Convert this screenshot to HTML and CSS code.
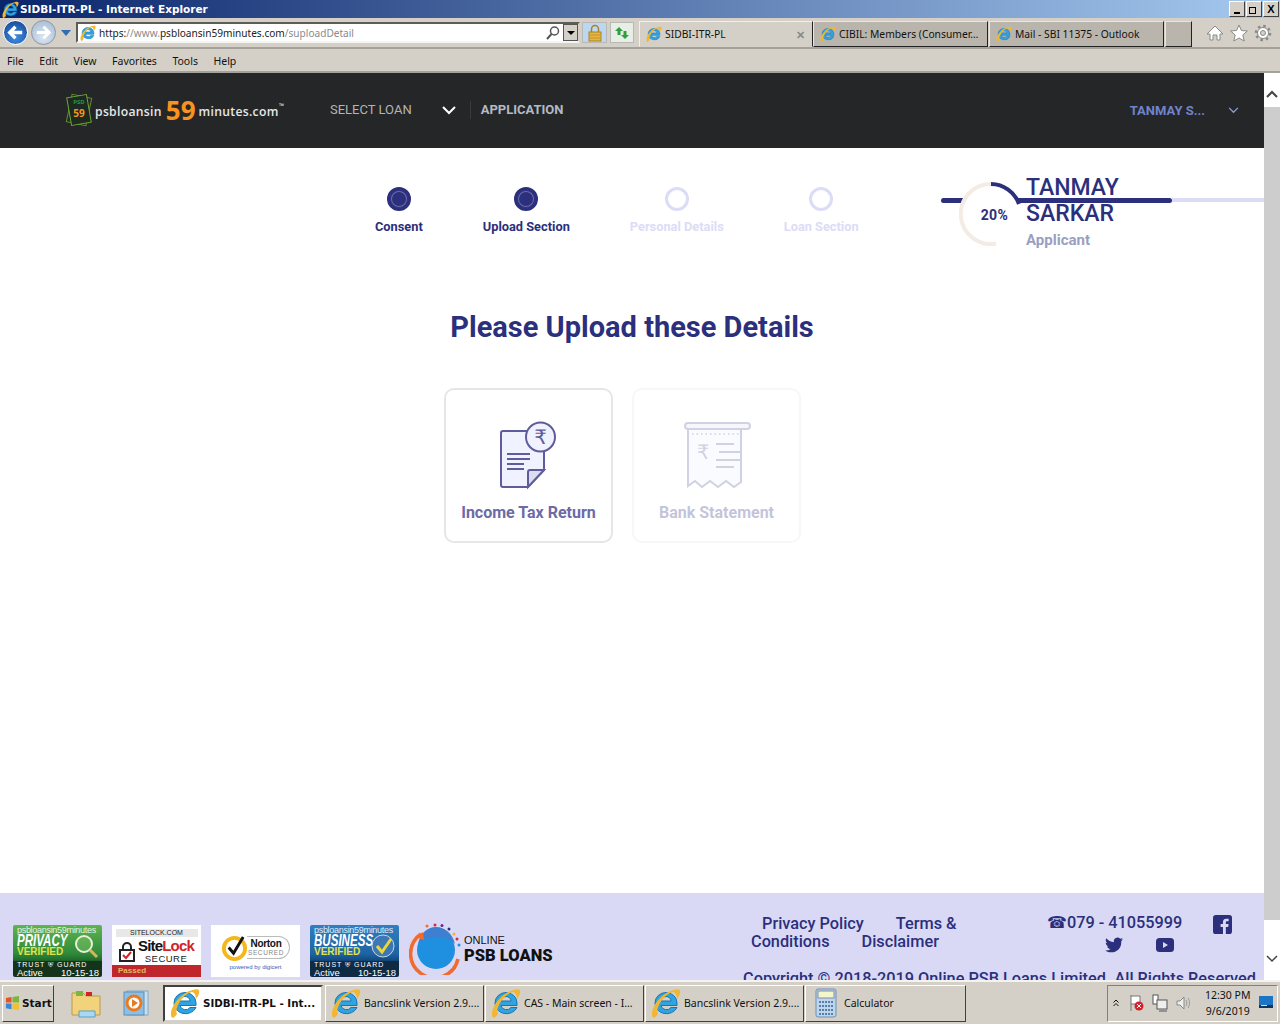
FILE: index.html
```html
<!DOCTYPE html>
<html lang="en">
<head>
    <meta charset="UTF-8">
    <meta name="viewport" content="width=device-width, initial-scale=1.0">
    <title>SIDBI-ITR-PL</title>
    <link rel="stylesheet" href="styles.css">
</head>
<body>
    <svg class="defs" width="0" height="0">
        <symbol id="ie" viewBox="1 1 30 30">
            <path d="M5 16a11 10.500 0 0 1 22 0v2.500H11a5.500 5 0 0 0 10 2h6a11.500 10.500 0 0 1-22-4.500zM11 14h10a5 4.500 0 0 0-10 0z" fill="#2fa4e0" stroke="#1677b8" stroke-width="1"/>
            <path d="M3 30.500C-1 26 6 11 19 4.500c5-2 10-3.500 11-1 1 2-1 6-3 8.500 0-3-1.500-7-4-7C14 7 5 21 8 27c-2 3-4 4.500-5 3.500z" fill="#f2b632"/>
        </symbol>
    </svg>

    <div class="titlebar">
        <svg class="ie-title"><use href="#ie"/></svg>
        <span class="title-text">SIDBI-ITR-PL - Internet Explorer</span>
        <div class="win-btns">
            <span class="win-btn"><i class="min-glyph"></i></span>
            <span class="win-btn"><i class="max-glyph"></i></span>
            <span class="win-btn close-btn">X</span>
        </div>
    </div>

    <div class="toolbar">
        <span class="nav-btn back"><svg viewBox="0 0 24 24"><path d="M19 12H7M12 6l-6 6 6 6" fill="none" stroke="#fff" stroke-width="3.500"/></svg></span>
        <span class="nav-btn forward"><svg viewBox="0 0 24 24"><path d="M5 12h12M12 6l6 6-6 6" fill="none" stroke="#fff" stroke-width="3"/></svg></span>
        <i class="nav-drop"></i>
        <div class="address">
            <svg class="ie-small"><use href="#ie"/></svg>
            <span class="url"><b>https:</b>//www.<b>psbloansin59minutes.com</b>/suploadDetail</span>
            <svg class="search-icon" viewBox="0 0 16 16"><circle cx="9.500" cy="6" r="4" fill="none" stroke="#555" stroke-width="1.500"/><path d="M6.500 9L2 14" stroke="#555" stroke-width="2"/></svg>
            <span class="addr-drop"></span>
        </div>
        <span class="lock-btn">
            <svg viewBox="0 0 16 18"><path d="M4.500 8V5a3.500 3.500 0 0 1 7 0v3" fill="none" stroke="#a8832a" stroke-width="1.500"/><rect x="2" y="8" width="12" height="9" fill="#e5b53e" stroke="#a8832a"/><path d="M3 11h10M3 14h10" stroke="#c4932b"/></svg>
        </span>
        <span class="refresh-btn">
            <svg viewBox="0 0 16 16"><path d="M1 6l4-4 4 4H6.500v4h-3V6zM15 10l-4 4-4-4h2.500V6h3v4z" fill="#2f9e3c"/></svg>
        </span>
        <div class="tabs">
            <div class="tab tab-active"><svg class="ie-small"><use href="#ie"/></svg><span class="tab-name">SIDBI-ITR-PL</span><span class="tab-x">✕</span></div>
            <div class="tab"><svg class="ie-small"><use href="#ie"/></svg><span class="tab-name">CIBIL: Members (Consumer…</span></div>
            <div class="tab"><svg class="ie-small"><use href="#ie"/></svg><span class="tab-name">Mail - SBI 11375 - Outlook</span></div>
            <div class="tab tab-new"></div>
        </div>
        <div class="tool-icons">
            <svg viewBox="0 0 18 18"><path d="M9 2l8 8h-3v6h-3v-5H7v5H4v-6H1z" fill="#fff" stroke="#8a8a85"/></svg>
            <svg viewBox="0 0 18 18"><path d="M9 1l2.400 5.500 6 .5-4.600 4 1.400 6L9 14l-5.200 3 1.400-6L.6 7l6-.5z" fill="#fff" stroke="#8a8a85"/></svg>
            <svg viewBox="0 0 18 18"><circle cx="9" cy="9" r="5.500" fill="#fff" stroke="#8a8a85" stroke-width="1"/><circle cx="9" cy="9" r="7" fill="none" stroke="#8a8a85" stroke-width="2.500" stroke-dasharray="2.500 3"/><circle cx="9" cy="9" r="2.500" fill="#d4d0c8" stroke="#8a8a85"/></svg>
        </div>
    </div>

    <div class="menubar">
        <span>File</span><span>Edit</span><span>View</span><span>Favorites</span><span>Tools</span><span>Help</span>
    </div>

    <div class="viewport">
        <div class="page">
            <header class="site-header">
                <div class="logo">
                    <svg class="logo-mark" viewBox="0 0 30 36">
                        <rect x="5" y="4" width="20" height="28" fill="none" stroke="#5e8f2f" transform="rotate(12 15 18)"/>
                        <rect x="5" y="4" width="20" height="28" fill="#1d2a20" stroke="#6fa635" transform="rotate(-10 15 18)"/>
                        <text x="15" y="12" class="logo-psd">PSD</text>
                        <text x="15" y="25" class="logo-59">59</text>
                    </svg>
                    <span class="logo-name">psbloansin</span>
                    <span class="logo-num">59</span>
                    <span class="logo-name">minutes.com</span>
                    <sup class="logo-tm">™</sup>
                </div>
                <a class="nav-select">SELECT LOAN</a>
                <svg class="nav-chev" viewBox="0 0 14 9"><path d="M1 1l6 6 6-6" fill="none" stroke="#fff" stroke-width="2"/></svg>
                <span class="nav-sep"></span>
                <a class="nav-app">APPLICATION</a>
                <div class="user-menu">
                    <span class="user-name">TANMAY S...</span>
                    <svg class="user-chev" viewBox="0 0 12 8"><path d="M1 1l5 5 5-5" fill="none" stroke="#8f9bd4" stroke-width="1.500"/></svg>
                </div>
            </header>

            <main class="content">
                <div class="top-row">
                    <div class="stepper">
                        <div class="step done"><span class="dot"></span><span class="step-label">Consent</span></div>
                        <div class="step done"><span class="dot"></span><span class="step-label">Upload Section</span></div>
                        <div class="step"><span class="dot"></span><span class="step-label">Personal Details</span></div>
                        <div class="step"><span class="dot"></span><span class="step-label">Loan Section</span></div>
                    </div>
                    <div class="profile">
                        <span class="line-dark"></span>
                        <span class="line-light"></span>
                        <svg class="ring" viewBox="0 0 64 64">
                            <circle cx="32" cy="32" r="29" fill="#fff"/>
                            <path d="M37.200 61.500A30 30 0 1 1 32 2" fill="none" stroke="#f3ebe4" stroke-width="4"/>
                            <path d="M32 2A30 30 0 0 1 60 22" fill="none" stroke="#2b2f7c" stroke-width="4"/>
                            <text x="35.500" y="38" class="ring-text">20%</text>
                        </svg>
                        <div class="who">
                            <div class="who-name">TANMAY SARKAR</div>
                            <div class="who-role">Applicant</div>
                        </div>
                    </div>
                </div>

                <h1 class="heading">Please Upload these Details</h1>

                <div class="cards">
                    <div class="card">
                        <svg class="card-icon" viewBox="0 0 70 70">
                            <path d="M9 11h39a2 2 0 0 1 2 2v37L34 67H9a2 2 0 0 1-2-2V13a2 2 0 0 1 2-2z" fill="#f0f2ff" stroke="#5f5c9e" stroke-width="2"/>
                            <path d="M34 67V52a2 2 0 0 1 2-2h14z" fill="#dcdcec" stroke="#5f5c9e" stroke-width="2"/>
                            <path d="M13 34h23M13 39h23M13 44h17M13 49h17" stroke="#5f5c9e" stroke-width="2"/>
                            <circle cx="46.500" cy="17" r="14.500" fill="#f0f2ff" stroke="#5f5c9e" stroke-width="2"/>
                            <text x="46.500" y="24" class="rupee">₹</text>
                        </svg>
                        <span class="card-label">Income Tax Return</span>
                    </div>
                    <div class="card card-off">
                        <svg class="card-icon" viewBox="0 0 70 70">
                            <rect x="3" y="3" width="65" height="6" rx="3" fill="#e3e4f1" stroke="#5f5c9e" stroke-width="2"/>
                            <path d="M6 9v57l7-5 7 6 8-6 8 6 8-6 8 6 7-5V9z" fill="#f0f2ff" stroke="#5f5c9e" stroke-width="2"/>
                            <path d="M10 14h50" stroke="#5f5c9e" stroke-width="1.500" stroke-dasharray="1.500 3"/>
                            <path d="M34 24h18M37 32h23M34 40h26M34 47h18" stroke="#5f5c9e" stroke-width="2"/>
                            <text x="21" y="39" class="rupee">₹</text>
                        </svg>
                        <span class="card-label">Bank Statement</span>
                    </div>
                </div>
            </main>

            <footer class="site-footer">
                <div class="badges">
                    <div class="badge tg-green">
                        <span class="tg-top">psbloansin59minutes</span>
                        <span class="tg-big">PRIVACY</span>
                        <span class="tg-ver">VERIFIED</span>
                        <span class="tg-trust">TRUST ⛨ GUARD</span>
                        <span class="tg-foot"><span>Active</span><span>10-15-18</span></span>
                        <svg class="tg-art" viewBox="0 0 26 26"><circle cx="11" cy="11" r="8" fill="#7cc163" fill-opacity=".5" stroke="#e8efd8" stroke-width="2"/><path d="M17 17l7 7" stroke="#d7b35a" stroke-width="3"/></svg>
                    </div>
                    <div class="badge sitelock">
                        <span class="sl-top">SITELOCK.COM</span>
                        <div class="sl-mid">
                            <svg class="sl-lock" viewBox="0 0 16 20"><path d="M4 9V5a4 4 0 0 1 8 0v4" fill="none" stroke="#222" stroke-width="2"/><rect x="1" y="8" width="14" height="11" fill="#fff" stroke="#222" stroke-width="2"/><path d="M4 13l3 3 5-6" fill="none" stroke="#d2232a" stroke-width="2"/></svg>
                            <div class="sl-words">
                                <span class="sl-name">Site<em>Lock</em></span>
                                <span class="sl-secure">SECURE</span>
                            </div>
                        </div>
                        <span class="sl-pass">Passed</span>
                    </div>
                    <div class="badge norton">
                        <div class="nt-row">
                            <svg class="nt-check" viewBox="0 0 28 28"><circle cx="14" cy="15" r="11" fill="#fff" stroke="#f5b81c" stroke-width="4"/><path d="M8 14l5 6L23 3" fill="none" stroke="#111" stroke-width="3"/></svg>
                            <div class="nt-pill">
                                <span class="nt-name">Norton</span>
                                <span class="nt-sec">SECURED</span>
                            </div>
                        </div>
                        <span class="nt-by">powered by digicert</span>
                    </div>
                    <div class="badge tg-blue">
                        <span class="tg-top">psbloansin59minutes</span>
                        <span class="tg-big">BUSINESS</span>
                        <span class="tg-ver">VERIFIED</span>
                        <span class="tg-trust">TRUST ⛨ GUARD</span>
                        <span class="tg-foot"><span>Active</span><span>10-15-18</span></span>
                        <svg class="tg-art" viewBox="0 0 26 26"><circle cx="13" cy="13" r="11" fill="#3d78b5" stroke="#c9d6e4"/><path d="M7 13l5 6L21 6" fill="none" stroke="#e8d63a" stroke-width="3"/></svg>
                    </div>
                    <div class="psb-logo">
                        <svg class="psb-mark" viewBox="0 0 52 52">
                            <circle cx="27" cy="27" r="19" fill="#1f8fe0"/>
                            <path d="M9 21c8-8 28-10 37 0-2-10-10-17-19-17S11 11 9 21z" fill="#3f7fcf"/>
                            <path d="M12 11A24 24 0 1 0 49 36" fill="none" stroke="#f26a2e" stroke-width="3.500"/>
                            <path d="M6 14l8-5 1 8z" fill="#f26a2e"/>
                            <g class="psb-dots">
                                <circle cx="18" cy="3" r="1.500" fill="#f26a2e"/><circle cx="26" cy="2" r="1.500" fill="#d22a4c"/><circle cx="33" cy="2.500" r="1.500" fill="#5e2d91"/><circle cx="40" cy="6" r="1.500" fill="#2b2f7c"/><circle cx="45" cy="11" r="1.500" fill="#f5b81c"/><circle cx="48" cy="16" r="1.500" fill="#d22a4c"/><circle cx="50" cy="22" r="1.500" fill="#1f8fe0"/>
                            </g>
                        </svg>
                        <div class="psb-words">
                            <span class="psb-online">ONLINE</span>
                            <span class="psb-name">PSB LOANS</span>
                        </div>
                    </div>
                </div>

                <div class="foot-right">
                    <div class="foot-top">
                        <div class="foot-links">
                            <div class="links-one"><a>Privacy Policy</a><a>Terms &amp;</a></div>
                            <div class="links-two"><a>Conditions</a><a>Disclaimer</a></div>
                        </div>
                        <div class="contact">
                            <div class="contact-row">
                                <span class="phone"><span class="phone-glyph">☎</span>079 - 41055999</span>
                                <svg class="fb" viewBox="0 0 20 20"><path d="M3 0h14a3 3 0 0 1 3 3v14a3 3 0 0 1-3 3h-3.500v-7.500H16l.4-3h-2.900V8c0-1 .4-1.500 1.500-1.500h1.500V4h-2.500C11.500 4 10.500 5.500 10.500 7.500v2H8v3h2.500V20H3a3 3 0 0 1-3-3V3a3 3 0 0 1 3-3z" fill="#2b2f7c"/></svg>
                            </div>
                            <div class="social-row">
                                <svg class="tw" viewBox="0 0 24 20"><path d="M24 2.400c-.9.400-1.800.7-2.800.8 1-.6 1.800-1.600 2.200-2.700-1 .6-2 1-3.100 1.200A4.900 4.900 0 0 0 11.900 6.200C7.800 6 4.200 4 1.700.9c-1.300 2.200-.7 5.100 1.500 6.600-.8 0-1.600-.2-2.200-.6 0 2.300 1.600 4.400 4 4.900-.7.200-1.500.2-2.200.1.600 2 2.400 3.400 4.600 3.400A9.900 9.900 0 0 1 0 17.300C9.800 23.600 22.900 17.500 21.600 5c1-.7 1.800-1.600 2.400-2.600z" fill="#2b2f7c"/></svg>
                                <svg class="yt" viewBox="0 0 18 14"><rect width="18" height="14" rx="3.500" fill="#2b2f7c"/><path d="M7 4l5 3-5 3z" fill="#d9d9f5"/></svg>
                            </div>
                        </div>
                    </div>
                    <p class="copyright">Copyright © 2018-2019 Online PSB Loans Limited. All Rights Reserved</p>
                </div>
            </footer>
        </div>

        <div class="scrollbar">
            <svg class="arrow" viewBox="0 0 16 16"><path d="M3 10l5-5 5 5" fill="none" stroke="#444" stroke-width="2"/></svg>
            <div class="thumb"></div>
            <svg class="arrow arrow-down" viewBox="0 0 16 16"><path d="M3 6l5 5 5-5" fill="none" stroke="#444" stroke-width="1.500"/></svg>
        </div>
    </div>

    <div class="taskbar">
        <div class="start"><svg viewBox="0 0 16 16"><path d="M1 2l6-1v6H1z" fill="#e2562a"/><path d="M8 1l7-1v7H8z" fill="#7db63d"/><path d="M1 8h6v6l-6-1z" fill="#3a86d8"/><path d="M8 8h7v7l-7-1z" fill="#f1c02f"/></svg>Start</div>
        <div class="quick">
            <svg class="folder" viewBox="0 0 32 32"><path d="M1 6h11l3 3h14v19H1z" fill="#f2d27a" stroke="#b59a52"/><rect x="5" y="4" width="7" height="5" fill="#7db63d"/><rect x="15" y="5" width="6" height="4" fill="#d2232a"/><path d="M8 24h16v6H8z" fill="#a8d8f2" stroke="#5e9ec4"/></svg>
            <svg class="player" viewBox="0 0 28 28"><rect x="5" y="2" width="21" height="24" fill="#c9dff0" stroke="#7fa8c9"/><rect x="2" y="3" width="20" height="23" fill="#8cbfe6" stroke="#5c8fb8"/><circle cx="12" cy="14" r="7" fill="#fff" stroke="#ea7a1f" stroke-width="3"/><path d="M10 10l6 4-6 4z" fill="#ea7a1f"/></svg>
        </div>
        <div class="task active"><svg class="ie-task"><use href="#ie"/></svg><span>SIDBI-ITR-PL - Int...</span></div>
        <div class="task"><svg class="ie-task"><use href="#ie"/></svg><span>Bancslink Version 2.9....</span></div>
        <div class="task"><svg class="ie-task"><use href="#ie"/></svg><span>CAS - Main screen - I...</span></div>
        <div class="task"><svg class="ie-task"><use href="#ie"/></svg><span>Bancslink Version 2.9....</span></div>
        <div class="task calc"><svg class="ie-task" viewBox="0 0 22 30"><rect x="1" y="1" width="20" height="28" rx="2" fill="#bcd6ee" stroke="#6b8fb3"/><rect x="3" y="3" width="16" height="7" fill="#f2f6c8" stroke="#88a"/><path d="M4 14h14M4 18h14M4 22h14M4 26h14" stroke="#5a7ea8" stroke-width="2" stroke-dasharray="2 1"/></svg><span>Calculator</span></div>
        <div class="tray">
            <svg class="tray-up" viewBox="0 0 6 8"><path d="M.5 3.500L3 1l2.500 2.500M.5 7L3 4.500 5.500 7" fill="none" stroke="#111"/></svg>
            <svg class="tray-ico" viewBox="0 0 16 18"><path d="M2 1v16M2 2h9v8H2" fill="#fff" stroke="#777"/><circle cx="10" cy="12" r="4.500" fill="#d2232a"/><path d="M8 10l4 4M12 10l-4 4" stroke="#fff"/></svg>
            <svg class="tray-ico" viewBox="0 0 16 18"><rect x="1" y="1" width="5" height="9" fill="#fff" stroke="#555"/><rect x="5" y="6" width="10" height="9" fill="#eee" stroke="#555"/><path d="M7 17h8" stroke="#555"/></svg>
            <svg class="tray-ico" viewBox="0 0 16 18"><path d="M2 7h3l4-4v12l-4-4H2z" fill="#eee" stroke="#888"/><path d="M11 6c1 2 1 4 0 6M13 4c2 3 2 7 0 10" fill="none" stroke="#999"/></svg>
            <div class="clock"><span>12:30 PM</span><span>9/6/2019</span></div>
            <svg class="desktop-ico" viewBox="0 0 14 14"><rect width="14" height="12" fill="#1c74c4"/><rect y="9" width="14" height="3" fill="#10365f"/><rect x="2" y="9" width="6" height="1" fill="#ddd"/></svg>
        </div>
    </div>
</body>
</html>
```

FILE: styles.css
```css
* {
    box-sizing: border-box;
    margin: 0;
    padding: 0;
}

body {
    width: 1280px;
    height: 1024px;
    overflow: hidden;
    display: flex;
    flex-direction: column;
    font-family: 'Noto Sans', sans-serif;
    background: #d4d0c8;
    color: #000;
}

.defs {
    position: absolute;
}

/* window chrome */
.titlebar {
    height: 18px;
    flex: none;
    display: flex;
    align-items: center;
    background: linear-gradient(90deg, #0a246a, #a6caf0);
    color: #fff;
}

.ie-title {
    width: 17px;
    height: 17px;
    margin: 0 1px 0 2px;
}

.title-text {
    font: bold 10.500px 'DejaVu Sans', sans-serif;
}

.win-btns {
    margin-left: auto;
    display: flex;
    gap: 1px;
    padding-right: 1px;
}

.win-btn {
    width: 16px;
    height: 16px;
    background: #d4d0c8;
    border: 1px solid;
    border-color: #fff #404040 #404040 #fff;
    display: flex;
    align-items: center;
    justify-content: center;
    font: bold 11px 'Liberation Sans', sans-serif;
    color: #000;
}

.min-glyph {
    width: 6px;
    height: 2px;
    background: #000;
    margin-top: 7px;
}

.max-glyph {
    position: relative;
    width: 7px;
    height: 7px;
    border: 1px solid #000;
    margin: 3px 3px 0 0;
    background: #d4d0c8;
}

.max-glyph::before {
    content: "";
    position: absolute;
    z-index: -1;
    width: 7px;
    height: 7px;
    left: 1px;
    top: -4px;
    border: 1px solid #000;
    border-top-width: 2px;
}

.toolbar {
    height: 31px;
    flex: none;
    display: flex;
    align-items: center;
    padding-left: 3px;
    border-bottom: 2px solid #a5a29b;
    background: #d4d0c8;
}

.nav-btn {
    width: 25px;
    height: 25px;
    border-radius: 50%;
    flex: none;
    display: flex;
    margin-right: 3px;
}

.nav-btn.back {
    background: radial-gradient(circle at 50% 70%, #3f8fe0, #153f8e);
    border: 1px solid #fff;
}

.nav-btn.forward {
    background: radial-gradient(circle at 50% 70%, #d9e6f4, #a4b8cf);
    border: 1px solid #8e97a3;
}

.nav-drop {
    width: 0;
    height: 0;
    border: 5px solid transparent;
    border-top: 6px solid #2f6db5;
    border-bottom: 0;
    margin: 0 5px 0 2px;
}

.address {
    width: 504px;
    height: 21px;
    flex: none;
    display: flex;
    align-items: center;
    background: #fff;
    border: 2px solid;
    border-color: #5e5c57 #d4d0c8 #f5f5f2 #5e5c57;
    font-size: 10.100px;
    color: #8a8a8a;
}

.ie-small {
    width: 16px;
    height: 16px;
    flex: none;
    margin: 0 3px 0 2px;
}

.url b {
    font-weight: 400;
    color: #222;
}

.search-icon {
    width: 16px;
    height: 16px;
    margin-left: auto;
    margin-right: 2px;
}

.addr-drop {
    width: 15px;
    height: 17px;
    background: #d4d0c8;
    border: 1px solid #555;
    position: relative;
}

.addr-drop::after {
    content: "";
    position: absolute;
    left: 3px;
    top: 6px;
    border: 4px solid transparent;
    border-top: 4px solid #000;
}

.lock-btn, .refresh-btn {
    width: 25px;
    height: 21px;
    flex: none;
    display: flex;
    justify-content: center;
    align-items: center;
    margin-left: 2px;
    border: 1px solid #b9b9b3;
    background: #bcd7ef;
}

.refresh-btn {
    width: 24px;
    margin-left: 3px;
    background: #e6eee6;
}

.lock-btn svg {
    height: 18px;
    width: 16px;
}

.refresh-btn svg {
    width: 16px;
    height: 16px;
}

.tabs {
    display: flex;
    margin-left: 5px;
    height: 26px;
    align-self: flex-end;
}

.tab {
    width: 175px;
    display: flex;
    align-items: center;
    padding-left: 4px;
    font-size: 10.300px;
    background: #b9b5ad;
    border: 1px solid;
    border-color: #e8e6e0 #222 #222 #e8e6e0;
    margin-right: 1px;
    color: #111;
}

.tab-active {
    width: 174px;
    background: #d4d0c8;
    border-color: #f2f0ea #222 #d4d0c8 #f2f0ea;
    margin-right: 0;
}

.tab-new {
    width: 27px;
}

.tab-x {
    margin-left: auto;
    margin-right: 7px;
    color: #8a8a85;
    font-weight: 700;
    font-size: 11px;
}

.tool-icons {
    display: flex;
    gap: 6px;
    margin-left: 13px;
}

.tool-icons svg {
    width: 18px;
    height: 18px;
}

.menubar {
    height: 24px;
    flex: none;
    display: flex;
    align-items: center;
    gap: 15.500px;
    padding: 1px 0 0 7px;
    font-size: 10.500px;
    color: #111;
    border-bottom: 2px solid #a5a29b;
}

/* page */
.viewport {
    flex: 1;
    min-height: 0;
    display: flex;
    background: #fff;
}

.page {
    width: 1264px;
    display: flex;
    flex-direction: column;
    font-family: Roboto, sans-serif;
    background: #fff;
}

.site-header {
    height: 75px;
    flex: none;
    background: #252628;
    display: flex;
    align-items: center;
    padding-left: 64px;
}

.logo {
    width: 266px;
    flex: none;
    display: flex;
    align-items: center;
    color: #e6e6e6;
    margin-bottom: 2px;
}

.logo-mark {
    width: 30px;
    height: 36px;
    margin-right: 1px;
}

.logo-psd {
    font: bold 6px 'Open Sans', sans-serif;
    fill: #1f9b45;
    text-anchor: middle;
}

.logo-59 {
    font: bold 10px 'Open Sans', sans-serif;
    fill: #f7931e;
    text-anchor: middle;
}

.logo-name {
    font: 600 12.200px 'Open Sans', sans-serif;
    letter-spacing: .3px;
    margin-top: 3px;
}

.logo-num {
    font: bold 26px/1 'Open Sans', sans-serif;
    color: #f7931e;
    margin: 0 3px 0 4px;
}

.logo-tm {
    font-size: 9px;
    margin-top: -6px;
}

.nav-select {
    font-size: 13px;
    color: #b4b4b4;
    margin-bottom: 2px;
}

.nav-chev {
    width: 14px;
    height: 9px;
    margin-left: 30px;
}

.nav-sep {
    width: 1px;
    height: 18px;
    background: #3a3b3d;
    margin: 0 10px 2px 14px;
}

.nav-app {
    font-size: 13px;
    font-weight: 700;
    color: #b4b9c4;
    margin-bottom: 2px;
}

.user-menu {
    margin-left: auto;
    padding-right: 25px;
    display: flex;
    align-items: center;
    gap: 23px;
}

.user-name {
    font-size: 13px;
    font-weight: 700;
    color: #6f84cc;
}

.user-chev {
    width: 11px;
    height: 7px;
}

.content {
    flex: 1;
    min-height: 0;
}

.top-row {
    display: flex;
    align-items: flex-start;
    padding: 27px 0 0 375px;
}

.stepper {
    display: flex;
    gap: 60px;
    margin-top: 12px;
    width: 484px;
    flex: none;
}

.step {
    display: flex;
    flex-direction: column;
    align-items: center;
    gap: 8px;
}

.dot {
    width: 24px;
    height: 24px;
    border-radius: 50%;
    border: 3px solid #dcdcf7;
    background: #fff;
}

.step.done .dot {
    background: #2b2f7c;
    border-color: #2b2f7c;
    box-shadow: inset 0 0 0 1px #2b2f7c, inset 0 0 0 2px #6a6da8;
}

.step-label {
    font-size: 12.800px;
    line-height: 16px;
    font-weight: 700;
    color: #dcdcf7;
    white-space: nowrap;
}

.step.done .step-label {
    color: #2b2f7c;
}

.profile {
    position: relative;
    flex: 1;
    margin-left: 82px;
    display: flex;
    padding-left: 18px;
}

.line-dark, .line-light {
    position: absolute;
    top: 23px;
    height: 5px;
    left: 0;
    width: 231px;
    background: #2b2f7c;
    border-radius: 3px;
}

.line-light {
    left: 231px;
    width: 92px;
    height: 4px;
    background: #dcdcf7;
    border-radius: 0;
}

.ring {
    position: relative;
    width: 64px;
    height: 64px;
    margin-top: 7px;
    flex: none;
}

.ring-text {
    font: bold 14px Roboto, sans-serif;
    fill: #2b2f7c;
    text-anchor: middle;
    letter-spacing: .4px;
}

.who {
    position: relative;
    margin-left: 3px;
}

.who-name {
    width: 120px;
    font-size: 23px;
    line-height: 26px;
    font-weight: 500;
    color: #2b2f7c;
}

.who-role {
    font-size: 15px;
    line-height: 24px;
    font-weight: 700;
    color: #9a9fc2;
    margin-top: 1px;
}

.heading {
    text-align: center;
    font-size: 29px;
    line-height: 36px;
    font-weight: 700;
    color: #2b2f7c;
    margin-top: 57px;
}

.cards {
    display: flex;
    justify-content: center;
    margin-top: 43px;
}

.card {
    width: 169px;
    height: 155px;
    margin-right: 19px;
    border: 2px solid #e6e6e6;
    border-radius: 10px;
    display: flex;
    flex-direction: column;
    align-items: center;
    padding-top: 30px;
}

.card-icon {
    width: 70px;
    height: 70px;
}

.rupee {
    font: 500 20px 'DejaVu Sans', sans-serif;
    fill: #5f5c9e;
    text-anchor: middle;
}

.card-label {
    margin-top: 13px;
    font-size: 16px;
    line-height: 20px;
    font-weight: 700;
    color: #6d6aa6;
}

.card-off {
    border-color: #f7f7f9;
}

.card-off .card-icon, .card-off .card-label {
    opacity: .28;
}

.card-off .card-label {
    color: #2b2f7c;
}

/* footer, cut off by the taskbar */
.site-footer {
    height: 87px;
    flex: none;
    overflow: hidden;
    display: flex;
    background: #d9d9f5;
    padding: 21px 0 0 13px;
}

.badges {
    width: 722px;
    flex: none;
    display: flex;
    gap: 10px;
    margin-top: 11px;
    align-items: flex-start;
}

.badge {
    width: 89px;
    height: 52px;
    flex: none;
    position: relative;
    overflow: hidden;
    font-family: 'Liberation Sans', sans-serif;
}

.tg-green, .tg-blue {
    display: flex;
    flex-direction: column;
    padding: 1px 3px 0 4px;
    color: #fff;
    border-radius: 2px;
    background: linear-gradient(#5fb550 0, #2f8a3a 55%, #1f6b2c 68%, #13331b 70%);
}

.tg-blue {
    background: linear-gradient(#2f7fc2 0, #1f64a4 55%, #134a80 68%, #0e2a44 70%);
}

.tg-top {
    font-size: 9px;
    line-height: 9px;
    letter-spacing: -.3px;
    white-space: nowrap;
    opacity: .85;
}

.tg-big {
    font-size: 17px;
    line-height: 12px;
    font-weight: 700;
    font-style: italic;
    transform: scaleX(.68);
    transform-origin: left;
}

.tg-ver {
    font-size: 10px;
    line-height: 10px;
    font-weight: 700;
    color: #e2e34a;
}

.tg-trust {
    font-size: 7px;
    line-height: 8px;
    margin-top: 4px;
    letter-spacing: 1px;
    white-space: nowrap;
}

.tg-foot {
    display: flex;
    justify-content: space-between;
    font-size: 9.500px;
    line-height: 8px;
}

.tg-art {
    position: absolute;
    right: 3px;
    top: 8px;
    width: 26px;
    height: 26px;
}

.sitelock {
    background: #fff;
    display: flex;
    flex-direction: column;
    align-items: center;
    padding-top: 4px;
}

.sl-top {
    width: 82px;
    background: #e8e8e8;
    text-align: center;
    font-size: 7px;
    line-height: 8px;
    color: #222;
}

.sl-mid {
    display: flex;
    align-items: center;
    gap: 3px;
    height: 28px;
    margin-top: 1px;
}

.sl-lock {
    width: 16px;
    height: 20px;
}

.sl-words {
    display: flex;
    flex-direction: column;
    align-items: center;
}

.sl-name {
    font-size: 15px;
    line-height: 14px;
    font-weight: 700;
    letter-spacing: -.8px;
    color: #111;
}

.sl-name em {
    font-style: normal;
    color: #d2232a;
}

.sl-secure {
    font-size: 9.500px;
    line-height: 11px;
    letter-spacing: .5px;
    color: #222;
}

.sl-pass {
    align-self: stretch;
    margin-top: auto;
    height: 12px;
    background: #c0272d;
    color: #e0b95c;
    font-size: 8px;
    line-height: 12px;
    font-weight: 700;
    padding-left: 6px;
}

.norton {
    background: #fff;
    display: flex;
    flex-direction: column;
    align-items: center;
    padding-top: 9px;
}

.nt-row {
    display: flex;
    align-items: center;
}

.nt-check {
    width: 27px;
    height: 27px;
    margin-right: -1px;
}

.nt-pill {
    display: flex;
    flex-direction: column;
    align-items: center;
    border: 1px solid #bbb;
    border-left: 0;
    border-radius: 0 12px 12px 0;
    padding: 2px 5px 1px 1px;
}

.nt-name {
    font-size: 10px;
    line-height: 10px;
    font-weight: 700;
    letter-spacing: -.3px;
    color: #111;
}

.nt-sec {
    font-size: 6.500px;
    line-height: 8px;
    letter-spacing: .6px;
    color: #888;
}

.nt-by {
    margin-top: 2px;
    font-size: 6px;
    line-height: 8px;
    color: #3a5bb5;
}

.psb-logo {
    display: flex;
    align-items: center;
    margin-top: -2px;
    font-family: 'Liberation Sans', sans-serif;
}

.psb-mark {
    width: 52px;
    height: 52px;
}

.psb-words {
    display: flex;
    flex-direction: column;
    margin-left: 3px;
    color: #111;
}

.psb-online {
    font-size: 11px;
    line-height: 14px;
}

.psb-name {
    font-family: Roboto, sans-serif;
    font-size: 16.500px;
    line-height: 18px;
    font-weight: 900;
}

.foot-right {
    flex: 1;
    font-weight: 500;
    color: #2b2f7c;
}

.foot-top {
    display: flex;
    align-items: flex-start;
}

.foot-links {
    width: 234px;
    flex: none;
    font-size: 16.300px;
    line-height: 18px;
    margin-top: 1px;
}

.links-one, .links-two {
    display: flex;
    gap: 32px;
    padding-left: 27px;
}

.links-two {
    padding-left: 16px;
}

.contact {
    width: 185px;
    margin-left: 78px;
    flex: none;
}

.contact-row {
    display: flex;
    justify-content: space-between;
    align-items: flex-start;
    font-size: 16.300px;
    line-height: 18px;
}

.phone-glyph {
    font-family: 'DejaVu Sans', sans-serif;
    font-size: 16px;
}

.fb {
    width: 19px;
    height: 19px;
    margin-top: 1px;
}

.social-row {
    display: flex;
    align-items: center;
    gap: 33px;
    margin-top: 3px;
    padding-left: 58px;
}

.tw {
    width: 18px;
    height: 16px;
}

.yt {
    width: 18px;
    height: 14px;
}

.copyright {
    text-align: center;
    font-size: 16.300px;
    line-height: 24px;
    margin-top: 14px;
    white-space: nowrap;
}

.scrollbar {
    width: 16px;
    flex: none;
    display: flex;
    flex-direction: column;
    background: #fff;
    padding-top: 14px;
}

.arrow {
    width: 16px;
    height: 16px;
    flex: none;
}

.thumb {
    height: 813px;
    margin-top: 4px;
    background: #cdcdcd;
}

.arrow-down {
    margin-top: 30px;
}

/* taskbar */
.taskbar {
    height: 44px;
    flex: none;
    display: flex;
    align-items: center;
    background: #d4d0c8;
    border-top: 2px solid #f4f3ef;
    padding-left: 2px;
    font-size: 10.500px;
    color: #111;
}

.start {
    width: 52px;
    height: 37px;
    flex: none;
    display: flex;
    align-items: center;
    gap: 2px;
    padding-left: 2px;
    font: bold 10.500px 'DejaVu Sans', sans-serif;
    border: 1px solid;
    border-color: #fff #404040 #404040 #fff;
}

.start svg {
    width: 15px;
    height: 15px;
    flex: none;
}

.quick {
    width: 109px;
    flex: none;
    display: flex;
    align-items: center;
    padding-left: 17px;
    gap: 19px;
}

.folder {
    width: 32px;
    height: 32px;
    flex: none;
}

.player {
    width: 28px;
    height: 28px;
    flex: none;
}

.task {
    width: 159px;
    height: 37px;
    flex: none;
    display: flex;
    align-items: center;
    gap: 3px;
    padding-left: 5px;
    margin-right: 1px;
    border: 1px solid;
    border-color: #fff #404040 #404040 #fff;
    white-space: nowrap;
}

.task.active {
    width: 160px;
    background: #fff;
    border: 2px solid;
    border-color: #404040 #d4d0c8 #d4d0c8 #404040;
    font: bold 10.300px 'DejaVu Sans', sans-serif;
    margin-right: 2px;
}

.ie-task {
    width: 30px;
    height: 30px;
    flex: none;
}

.calc {
    width: 161px;
}

.tray {
    width: 171px;
    height: 37px;
    flex: none;
    margin-left: auto;
    margin-right: 2px;
    display: flex;
    align-items: center;
    padding-left: 5px;
    gap: 7px;
    border: 1px solid;
    border-color: #808080 #fff #fff #808080;
}

.tray-up {
    width: 6px;
    height: 8px;
    flex: none;
    margin-right: 3px;
}

.tray-ico {
    width: 16px;
    height: 18px;
    flex: none;
}

.clock {
    display: flex;
    flex-direction: column;
    align-items: center;
    margin-left: 7px;
    line-height: 16px;
    white-space: nowrap;
}

.desktop-ico {
    width: 14px;
    height: 14px;
    margin-left: 2px;
    flex: none;
}
```
